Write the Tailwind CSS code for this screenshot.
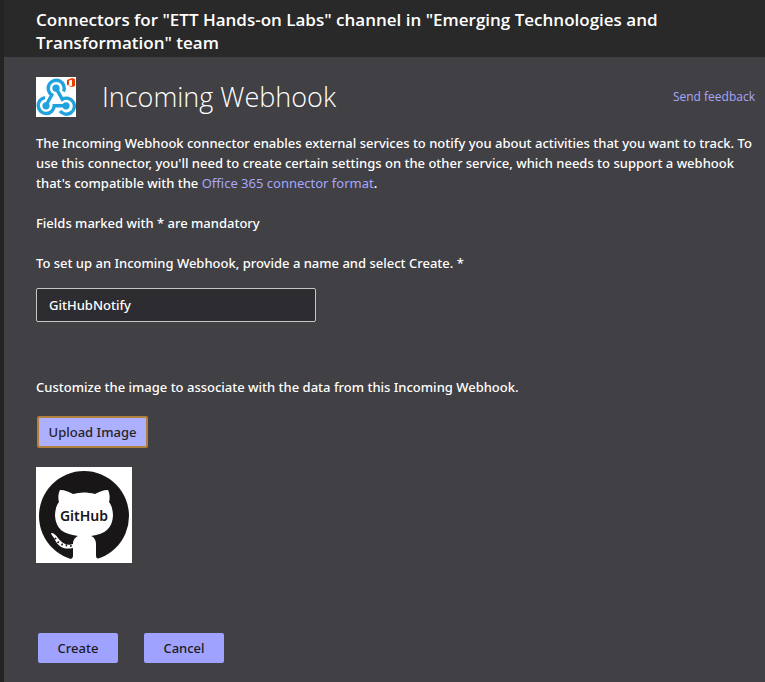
<!DOCTYPE html>
<html lang="en">
<head>
    <meta charset="UTF-8">
    <meta name="viewport" content="width=device-width, initial-scale=1.0">
    <title>Incoming Webhook</title>
    <script src="https://cdn.jsdelivr.net/npm/@tailwindcss/browser@4"></script>
</head>
<body class="min-h-screen bg-[#414044] border-l-4 border-[#252423] font-['Noto_Sans','Open_Sans',sans-serif] text-[13px] leading-5 font-medium text-white">

    <!-- Dialog title -->
    <header class="bg-[#292929] px-8 pt-2 pb-[3px]">
        <h1 class="font-['Open_Sans',sans-serif] text-[17px] leading-[23px] font-semibold">Connectors for "ETT Hands-on Labs" channel in "Emerging Technologies and Transformation" team</h1>
    </header>

    <main class="pl-8 pr-[10px] pt-5">
        <div class="flex items-center font-['Open_Sans',sans-serif]">
            <svg class="w-10 h-10 shrink-0 bg-white" viewBox="0 0 40 40" fill="none" role="img" aria-label="Webhook">
                <g stroke="#1fa2dd" stroke-width="3.4">
                    <path d="M27.5 14.5A8 8 0 1 0 15.8 17.9L10 28.5"/>
                    <path d="M20 11.2L26.3 22.3A8 8 0 1 1 24 34"/>
                    <path d="M9 20.6A8 8 0 1 0 18.2 28.8H30"/>
                </g>
                <g fill="#1fa2dd">
                    <circle cx="20" cy="11.2" r="3.6"/>
                    <circle cx="10" cy="28.8" r="3.6"/>
                    <circle cx="30" cy="28.8" r="3.6"/>
                </g>
                <path fill="#eb3c00" fill-rule="evenodd" d="M31 3L36 1L39 2V9L36 10L31 8.5L36 9V2.8L33 3.5V7.5L31 8.2Z"/>
            </svg>
            <h2 class="ml-[26px] grow text-[27px] leading-10 font-light">Incoming Webhook</h2>
            <a href="#" class="text-xs font-normal text-[#a6a7fc]">Send feedback</a>
        </div>

        <p class="mt-4">The Incoming Webhook connector enables external services to notify you about activities that you want to track. To use this connector, you'll need to create certain settings on the other service, which needs to support a webhook that's compatible with the <a href="#" class="font-normal text-[#a6a7fc]">Office 365 connector format</a>.</p>
        <p class="mt-5">Fields marked with * are mandatory</p>

        <form>
            <label for="name" class="mt-5 block">To set up an Incoming Webhook, provide a name and select Create. *</label>
            <input id="name" type="text" value="GitHubNotify" class="mt-[15px] block h-[34px] w-70 rounded-xs border border-[#c8c6c4] bg-[#2d2c30] px-3">

            <p class="mt-[55px]">Customize the image to associate with the data from this Incoming Webhook.</p>
            <button type="button" class="mt-[19px] ml-px block h-8 w-[111px] rounded-xs border-2 border-[#b0803c] bg-[#adafff] text-[#252423] font-medium">Upload Image</button>

            <svg class="mt-[19px] w-24 h-24 bg-white" viewBox="0 0 96 96" role="img" aria-label="GitHub">
                <circle cx="48" cy="49" r="45" fill="#181617"/>
                <path fill="#fff" d="M24 23C22 27 22 32 23 35C20 39 19 44 19 49C20 62 27 67 42 69C38 71 37 74 37 77C30 79 26 76 22 71C20 68 18 66 15 66C15 68 17 69 18 71C22 80 28 83 37 81V89Q37 91 35 92L33 96H64L62 92Q60 91 60 89V77C60 73 58 70 55 69C70 67 76 61 77 49C77 44 76 39 73 35C74 32 74 27 72 23C67 23 63 25 59 27C51 25 44 25 37 27C33 25 29 23 24 23Z"/>
                <path d="M19 71L22 75L27 78L36 79" fill="none" stroke="#181617" stroke-width="2" stroke-dasharray="1.5 3"/>
                <text x="48" y="54" text-anchor="middle" class="text-[14px] font-semibold" fill="#181617">GitHub</text>
            </svg>

            <div class="mt-[70px] ml-0.5 mb-5 flex gap-[26px]">
                <button type="submit" class="h-[30px] w-20 rounded-xs bg-[#a0a2ff] text-[#1b1a1d] font-medium">Create</button>
                <button type="button" class="h-[30px] w-20 rounded-xs bg-[#a0a2ff] text-[#1b1a1d] font-medium">Cancel</button>
            </div>
        </form>
    </main>

</body>
</html>
